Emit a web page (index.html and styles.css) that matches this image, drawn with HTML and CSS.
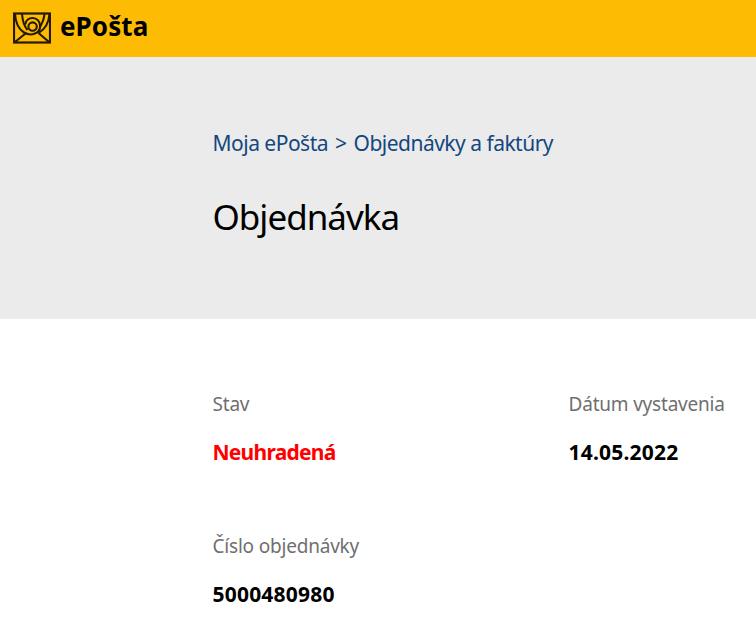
FILE: index.html
```html
<!DOCTYPE html>
<html lang="sk">
<head>
  <meta charset="UTF-8">
  <meta name="viewport" content="width=device-width, initial-scale=1.0">
  <title>Objednávka - ePošta</title>
  <link rel="stylesheet" href="styles.css">
</head>
<body>

<header class="topbar">
  <svg class="logo" viewBox="0 0 38 32" width="38" height="32" fill="none" stroke="#241a00" stroke-width="2.1">
    <rect x="1" y="1.500" width="36" height="29" stroke-width="2.2"/>
    <path d="M2 2C2.500 10 5.500 17 11 20.500C17 24.300 27.200 22.500 27.200 14"/>
    <path d="M9 2C9.500 8 11 14 14.500 18"/>
    <path d="M12.300 12.500C13 3.500 26.500 3.500 27.200 14"/>
    <circle cx="19.600" cy="14.600" r="4.200"/>
    <path d="M31.500 2C31 7 29.500 11 26.500 15.500M36.500 2C36 9 32.500 17 25.500 21"/>
    <path d="M2 30L12.500 21.500M36 30L25.500 21"/>
  </svg>
  <span class="brand">ePošta</span>
</header>

<div class="page-head">
  <nav class="breadcrumb">
    <a href="#">Moja ePošta</a>
    <span class="sep">&gt;</span>
    <a href="#">Objednávky a faktúry</a>
  </nav>
  <h1>Objednávka</h1>
</div>

<main class="details">
  <div class="item">
    <div class="label">Stav</div>
    <div class="value unpaid">Neuhradená</div>
  </div>
  <div class="item">
    <div class="label">Dátum vystavenia</div>
    <div class="value">14.05.2022</div>
  </div>
  <div class="item">
    <div class="label">Číslo objednávky</div>
    <div class="value">5000480980</div>
  </div>
</main>

</body>
</html>
```
FILE: styles.css
```css
body {
  margin: 0;
  background: #fff;
  color: #000;
  font-family: "Noto Sans", "Open Sans", sans-serif;
}
.topbar {
  display: flex;
  align-items: center;
  box-sizing: border-box;
  height: 57px;
  padding: 0 13px 3px;
  background: #fdbc03;
}
.logo {
  display: block;
  margin-top: 2px;
}
.brand {
  margin: -2px 0 0 9px;
  font-size: 26px;
  line-height: 36px;
  font-weight: bold;
  letter-spacing: 0.1px;
}
.page-head {
  box-sizing: border-box;
  height: 262px;
  padding: 71px 0 0 212.5px;
  background: #ebebeb;
}
.breadcrumb {
  display: flex;
  gap: 7px;
  font-size: 21px;
  line-height: 30px;
  letter-spacing: -0.51px;
  color: #14477e;
  white-space: nowrap;
}
.breadcrumb a {
  color: inherit;
  text-decoration: none;
}
h1 {
  margin: 33px 0 0;
  font-size: 35px;
  line-height: 52px;
  font-weight: normal;
  letter-spacing: -1px;
}
.details {
  display: grid;
  grid-template-columns: 356px 1fr;
  row-gap: 65px;
  padding: 71px 0 0 212.5px;
  white-space: nowrap;
}
.label {
  font-size: 19px;
  line-height: 28px;
  letter-spacing: -0.2px;
  color: #6f6f6f;
}
.value {
  margin-top: 19px;
  font-size: 21px;
  line-height: 30px;
  font-weight: bold;
  letter-spacing: 0.2px;
}
.unpaid {
  color: #f00;
  letter-spacing: -0.75px;
}
```
